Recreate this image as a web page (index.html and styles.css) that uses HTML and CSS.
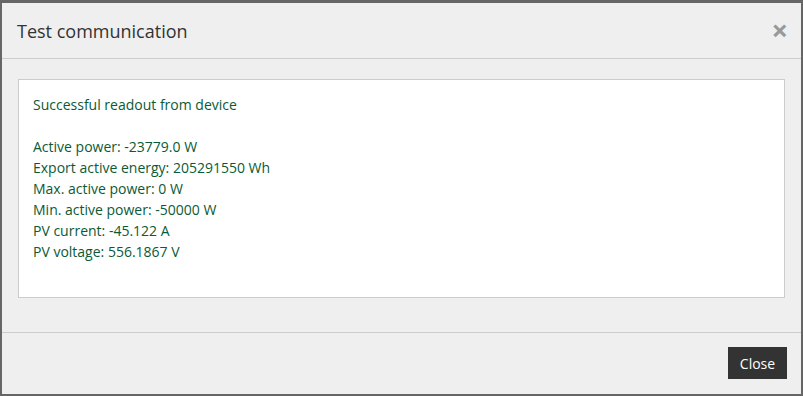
FILE: index.html
```html
<!DOCTYPE html>
<html lang="en">
<head>
    <meta charset="UTF-8">
    <meta name="viewport" content="width=device-width, initial-scale=1.0">
    <title>Test communication</title>
    <link rel="stylesheet" href="styles.css">
</head>
<body>

    <div class="modal">
        <div class="modal_head">
            <p class="title">Test communication</p>
            <span class="close_x">&times;</span>
        </div>

        <div class="modal_body">
            <div class="readout">
                <p>Successful readout from device</p>
                <p class="gap"></p>
                <p>Active power: -23779.0 W</p>
                <p>Export active energy: 205291550 Wh</p>
                <p>Max. active power: 0 W</p>
                <p>Min. active power: -50000 W</p>
                <p>PV current: -45.122 A</p>
                <p>PV voltage: 556.1867 V</p>
            </div>
        </div>

        <div class="modal_foot">
            <button class="close_btn">Close</button>
        </div>
    </div>

</body>
</html>
```

FILE: styles.css
```css
body{
    margin: 0;
    padding: 3px 2px 2px 2px;
    background: #666;
    font-family: 'Open Sans', 'Noto Sans', sans-serif;
    height: 396px;
    box-sizing: border-box;
}

.modal{
    background: #efefef;
    height: 100%;
    display: flex;
    flex-direction: column;
}

.modal_head{
    display: flex;
    justify-content: space-between;
    align-items: center;
    height: 55px;
    padding: 0 13px 0 15px;
    border-bottom: 1px solid #ccc;
}

.title{
    margin: 0;
    font-size: 18px;
    color: #333;
}

.close_x{
    font-size: 29px;
    font-weight: bold;
    color: #999;
    line-height: 1;
    margin-top: -2px;
}

.modal_body{
    padding: 20px 16px 0 16px;
    height: 274px;
    box-sizing: border-box;
    border-bottom: 1px solid #ccc;
}

.readout{
    background: #fff;
    border: 1px solid #ccc;
    padding: 14px 14px 35px 14px;
    color: #0b5a35;
    font-size: 14px;
    line-height: 21px;
}

.readout p{
    margin: 0;
}

.gap{
    height: 21px;
}

.modal_foot{
    display: flex;
    justify-content: flex-end;
    padding: 14px 14px 0 0;
}

.close_btn{
    background: #333;
    color: #fff;
    border: none;
    font-family: inherit;
    font-size: 14px;
    height: 32px;
    width: 59px;
    padding: 0;
}
```
